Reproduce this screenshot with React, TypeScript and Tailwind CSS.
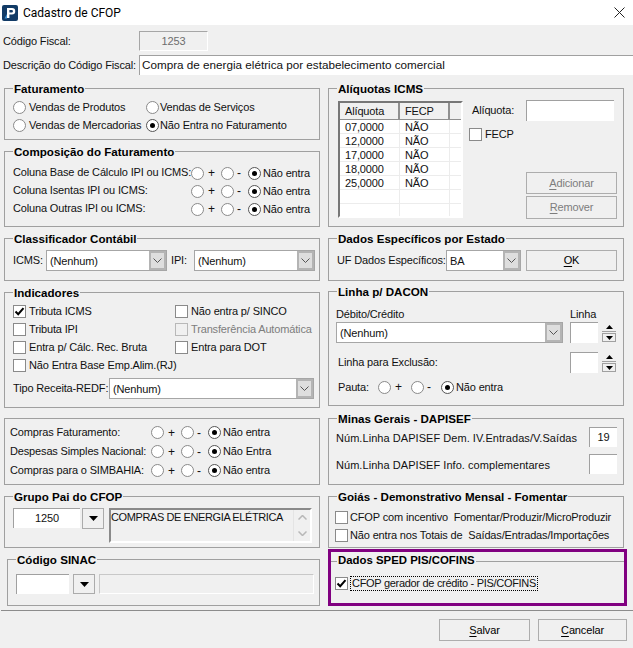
import React from "react";

function Radio({ on }: { on?: boolean }) {
  return (
    <span className={`flex h-[13px] w-[13px] shrink-0 items-center justify-center rounded-full border bg-white ${on ? "border-[#555555]" : "border-[#8a8a8a]"}`}>
      {on && <span className="h-[5px] w-[5px] rounded-full bg-black" />}
    </span>
  );
}

function Check({ on, off }: { on?: boolean; off?: boolean }) {
  return (
    <span className={`flex h-[13px] w-[13px] shrink-0 items-center justify-center border ${off ? "border-[#b8b8b8] bg-[#f0f0f0]" : "border-[#8a8a8a] bg-white"}`}>
      {on && (
        <svg width="11" height="11" viewBox="0 0 11 11" fill="none">
          <path d="M1.5 5.5 L4.2 8.2 L9.5 2.2" stroke="black" strokeWidth="2" />
        </svg>
      )}
    </span>
  );
}

function Tri({ a, b, last, className }: { a: string; b: string; last: string; className?: string }) {
  return (
    <div className={`flex items-center ${className ?? ""}`}>
      <span className={`flex items-center gap-[4px] text-[12px] ${a}`}>
        <Radio /> +
      </span>
      <span className={`flex items-center gap-[3px] text-[12px] ${b}`}>
        <Radio /> -
      </span>
      <span className="flex items-center gap-[2px]">
        <Radio on /> {last}
      </span>
    </div>
  );
}

function Group({ title, className, children }: { title?: string; className?: string; children?: React.ReactNode }) {
  return (
    <div className={`border border-[#a0a0a0] ${className ?? ""}`}>
      {title && (
        <div className="ml-[8px] -mt-[8px] h-[16px] w-fit bg-[#f0f0f0] px-[1px] text-[11.6px] font-bold leading-[16px] tracking-normal text-black">
          {title}
        </div>
      )}
      {children}
    </div>
  );
}

function Combo({ value, className }: { value: string; className?: string }) {
  return (
    <div className={`flex h-[21px] items-stretch border border-[#a6a6a6] bg-white ${className ?? ""}`}>
      <span className="flex-1 truncate pl-[3px] leading-[20px]">{value}</span>
      <span className="flex w-[17px] items-center justify-center border-2 border-[#b4b4b4] bg-[#dedede]">
        <svg width="9" height="5" viewBox="0 0 9 5" fill="none">
          <path d="M0.5 0.5 L4.5 4.5 L8.5 0.5" stroke="#555555" />
        </svg>
      </span>
    </div>
  );
}

// sunken edit box, only top and left show a line
function Edit({ value, className }: { value?: string; className?: string }) {
  return (
    <div className={`border-t border-l border-[#a0a0a0] bg-white leading-[18px] ${className ?? ""}`}>{value}</div>
  );
}

function DropBtn({ className }: { className?: string }) {
  return (
    <span className={`flex items-center justify-center border border-[#ababab] bg-[#f0f0f0] ${className ?? ""}`}>
      <svg width="9" height="5" viewBox="0 0 9 5">
        <path d="M0 0 H9 L4.5 5 Z" fill="black" />
      </svg>
    </span>
  );
}

function Spin() {
  return (
    <div className="flex flex-col gap-[1px]">
      <span className="flex h-[9px] w-[14px] items-center justify-center border-b border-[#a0a0a0] bg-[#f0f0f0]">
        <svg width="7" height="4" viewBox="0 0 7 4">
          <path d="M3.5 0 L7 4 H0 Z" fill="black" />
        </svg>
      </span>
      <span className="flex h-[9px] w-[14px] items-center justify-center border border-[#a0a0a0] bg-[#f0f0f0]">
        <svg width="7" height="4" viewBox="0 0 7 4">
          <path d="M0 0 H7 L3.5 4 Z" fill="black" />
        </svg>
      </span>
    </div>
  );
}

function Btn({ className, disabled, u, rest }: { className?: string; disabled?: boolean; u: string; rest: string }) {
  return (
    <button className={`flex items-center justify-center border border-[#adadad] bg-[#f0f0f0] ${disabled ? "text-[#7d7d7d]" : "text-black"} ${className ?? ""}`}>
      <span className="underline underline-offset-2">{u}</span>
      {rest}
    </button>
  );
}

const rates = ["07,0000", "12,0000", "17,0000", "18,0000", "25,0000", "", ""];

export default function App() {
  return (
    <div className="h-[648px] w-[633px] overflow-hidden whitespace-nowrap bg-[#f0f0f0] font-['Liberation_Sans',sans-serif] text-[11px] tracking-[-0.15px] text-[#111111]">
      {/* title bar */}
      <div className="flex h-[25px] items-center bg-white pl-[2px] pr-[8px]">
        <svg width="16" height="16" viewBox="0 0 16 16">
          <rect width="16" height="16" rx="2" fill="#123b66" />
          <path d="M5 3 H10 A3 3 0 0 1 10 9.5 H7.4 V13 H5 Z M7.4 5 V7.5 H9.7 A1.2 1.2 0 0 0 9.7 5 Z" fill="white" fillRule="evenodd" />
          <path d="M2.5 13.5 L5 9 V13.5 Z" fill="#3f8fd0" />
        </svg>
        <span className="ml-[5px] font-['Roboto',sans-serif] text-[12px] tracking-normal text-black">Cadastro de CFOP</span>
        <svg className="ml-auto" width="11" height="11" viewBox="0 0 11 11" fill="none">
          <path d="M0.5 0.5 L10.5 10.5 M10.5 0.5 L0.5 10.5" stroke="#222222" />
        </svg>
      </div>

      {/* codigo / descricao */}
      <div className="mt-[6px] flex h-[20px] items-center pl-[3px]">
        <span className="w-[136px]">Código Fiscal:</span>
        <div className="flex h-[20px] w-[69px] items-center justify-center border border-[#a6a6a6] border-b-white border-r-white text-[#6d6d6d]">1253</div>
      </div>
      <div className="mt-[4px] flex h-[20px] items-center pl-[3px]">
        <span className="w-[136px]">Descrição do Código Fiscal:</span>
        <Edit className="h-[20px] flex-1 pl-[2px] text-[11.7px] tracking-normal" value="Compra de energia elétrica por estabelecimento comercial" />
      </div>

      <div className="mt-[13px] flex items-start">
        {/* left column */}
        <div className="ml-[4px] w-[316px]">
          <Group title="Faturamento" className="h-[52px]">
            <div className="mt-[1px] flex h-[18px] items-center pl-[8px]">
              <span className="flex w-[133px] items-center gap-[3px]"><Radio /> Vendas de Produtos</span>
              <span className="flex items-center gap-[1px]"><Radio /> Vendas de Serviços</span>
            </div>
            <div className="flex h-[18px] items-center pl-[8px]">
              <span className="flex w-[133px] items-center gap-[3px]"><Radio /> Vendas de Mercadorias</span>
              <span className="flex items-center gap-[1px]"><Radio on /> Não Entra no Faturamento</span>
            </div>
          </Group>

          <Group title="Composição do Faturamento" className="mt-[11px] h-[76px]">
            {["Coluna Base de Cálculo IPI ou ICMS:", "Coluna Isentas IPI ou ICMS:", "Coluna Outras IPI ou ICMS:"].map((t, i) => (
              <div key={t} className={`flex h-[18px] items-center pl-[8px] ${i === 0 ? "mt-[4px]" : ""}`}>
                <span className="w-[178px] -translate-y-[1px]">{t}</span>
                <Tri a="w-[30px]" b="w-[27px]" last="Não entra" />
              </div>
            ))}
          </Group>

          <Group title="Classificador Contábil" className="mt-[11px] h-[43px]">
            <div className="mt-[3px] flex items-center pl-[8px]">
              <span className="w-[33px]">ICMS:</span>
              <Combo value="(Nenhum)" className="w-[121px]" />
              <span className="ml-[4px] w-[23px]">IPI:</span>
              <Combo value="(Nenhum)" className="w-[121px]" />
            </div>
          </Group>

          <Group title="Indicadores" className="mt-[11px] h-[116px]">
            <div className="mt-[1px] grid grid-cols-[162px_1fr] pl-[8px]">
              <label className="flex h-[18px] items-center gap-[3px]"><Check on /> Tributa ICMS</label>
              <label className="flex h-[18px] items-center gap-[3px]"><Check /> Não entra p/ SINCO</label>
              <label className="flex h-[18px] items-center gap-[3px]"><Check /> Tributa IPI</label>
              <label className="flex h-[18px] items-center gap-[3px] text-[#7d7d7d]"><Check off /> Transferência Automática</label>
              <label className="flex h-[18px] items-center gap-[3px]"><Check /> Entra p/ Cálc. Rec. Bruta</label>
              <label className="flex h-[18px] items-center gap-[3px]"><Check /> Entra para DOT</label>
              <label className="col-span-2 flex h-[18px] items-center gap-[3px]"><Check /> Não Entra Base Emp.Alim.(RJ)</label>
            </div>
            <div className="mt-[4px] flex items-center pl-[8px]">
              <span className="w-[96px]">Tipo Receita-REDF:</span>
              <Combo value="(Nenhum)" className="w-[205px]" />
            </div>
          </Group>

          <Group className="mt-[10px] h-[67px] pl-[5px] pt-[4px]">
            {[["Compras Faturamento:", "Não entra"], ["Despesas Simples Nacional:", "Não Entra"], ["Compras para o SIMBAHIA:", "Não entra"]].map(([t, l]) => (
              <div key={t} className="flex h-[19px] items-center">
                <span className="w-[141px]">{t}</span>
                <Tri a="w-[30px]" b="w-[27px]" last={l} />
              </div>
            ))}
          </Group>

          <Group title="Grupo Pai do CFOP" className="mt-[11px] h-[52px]">
            <div className="mt-[3px] flex items-start pl-[8px]">
              <Edit className="h-[20px] w-[67px] text-center" value="1250" />
              <DropBtn className="ml-[2px] h-[21px] w-[22px]" />
              <div className="ml-[5px] flex h-[35px] w-[203px] border-2 border-[#8a8a8a] border-b-white border-r-white">
                <span className="min-w-0 flex-1 overflow-hidden leading-[14px] tracking-[-0.4px]">COMPRAS DE ENERGIA ELÉTRICA</span>
                <span className="flex w-[17px] shrink-0 flex-col items-center justify-around border-l border-[#e4e4e4]">
                  <svg width="9" height="5" viewBox="0 0 9 5" fill="none"><path d="M0.5 4.5 L4.5 0.5 L8.5 4.5" stroke="#b8b8b8" strokeWidth="1.5" /></svg>
                  <svg width="9" height="5" viewBox="0 0 9 5" fill="none"><path d="M0.5 0.5 L4.5 4.5 L8.5 0.5" stroke="#b8b8b8" strokeWidth="1.5" /></svg>
                </span>
              </div>
            </div>
          </Group>

          <Group title="Código SINAC" className="ml-[3px] mt-[11px] h-[47px]">
            <div className="mt-[6px] flex items-start pl-[8px]">
              <Edit className="h-[20px] w-[53px]" />
              <DropBtn className="ml-[4px] h-[20px] w-[22px]" />
              <div className="ml-[4px] h-[20px] w-[215px] border border-[#c8c8c8] border-b-white border-r-white" />
            </div>
          </Group>
        </div>

        {/* right column */}
        <div className="ml-[8px] w-[299px]">
          <Group title="Alíquotas ICMS" className="h-[139px] w-[296px]">
            <div className="mt-[4px] flex items-start pl-[9px]">
              <div className="h-[117px] w-[125px] overflow-hidden border-2 border-[#777777] border-b-white border-r-white bg-white">
                <div className="flex h-[17px] border-b border-[#8f8f8f] bg-[#f0f0f0]">
                  <span className="w-[60px] border-r-2 border-[#8f8f8f] pl-[5px] leading-[16px]">Alíquota</span>
                  <span className="w-[50px] border-r-2 border-[#8f8f8f] pl-[5px] leading-[16px]">FECP</span>
                </div>
                {rates.map((r, i) => (
                  <div key={i} className="flex h-[14px] border-b border-[#ececec] leading-[15px]">
                    <span className="w-[60px] border-r border-[#ececec] pl-[5px]">{r}</span>
                    <span className="w-[50px] border-r border-[#ececec] pl-[5px]">{r && "NÃO"}</span>
                  </div>
                ))}
              </div>
              <div className="ml-[6px]">
                <div className="-mt-[1px] flex h-[21px] items-center">
                  <span className="ml-[3px] w-[54px]">Alíquota:</span>
                  <Edit className="h-[21px] w-[88px]" />
                </div>
                <label className="mt-[7px] flex h-[13px] items-center gap-[3px]"><Check /> FECP</label>
                <Btn disabled u="A" rest="dicionar" className="ml-[57px] mt-[31px] h-[22px] w-[91px]" />
                <Btn disabled u="R" rest="emover" className="ml-[57px] mt-[2px] h-[23px] w-[91px]" />
              </div>
            </div>
          </Group>

          <Group title="Dados Específicos por Estado" className="mt-[11px] h-[43px] w-[296px]">
            <div className="mt-[3px] flex items-center pl-[8px]">
              <span className="w-[109px]">UF Dados Específicos:</span>
              <Combo value="BA" className="w-[75px]" />
              <Btn u="O" rest="K" className="ml-[5px] h-[21px] w-[91px]" />
            </div>
          </Group>

          <Group title="Linha p/ DACON" className="mt-[10px] h-[115px] w-[296px]">
            <div className="mt-[6px] flex h-[16px] items-center pl-[7px]">
              <span className="w-[234px]">Débito/Crédito</span>
              <span>Linha</span>
            </div>
            <div className="flex items-start pl-[7px]">
              <Combo value="(Nenhum)" className="w-[227px]" />
              <Edit className="ml-[7px] h-[21px] w-[28px]" />
              <span className="ml-[4px] mt-[1px]"><Spin /></span>
            </div>
            <div className="mt-[9px] flex items-center pl-[9px]">
              <span className="w-[232px]">Linha para Exclusão:</span>
              <Edit className="h-[21px] w-[28px]" />
              <span className="ml-[4px]"><Spin /></span>
            </div>
            <div className="mt-[5px] flex h-[18px] items-center pl-[9px]">
              <span className="w-[40px]">Pauta:</span>
              <Tri a="w-[33px]" b="w-[30px]" last="Não entra" />
            </div>
          </Group>

          <Group title="Minas Gerais - DAPISEF" className="mt-[12px] h-[67px] w-[296px]">
            <div className="flex items-start pl-[7px]">
              <span className="mt-[3px] w-[253px] tracking-[0.05px]">Núm.Linha DAPISEF Dem. IV.Entradas/V.Saídas</span>
              <Edit className="h-[20px] w-[28px] text-center" value="19" />
            </div>
            <div className="mt-[7px] flex items-start pl-[7px]">
              <span className="mt-[3px] w-[253px] tracking-[0.05px]">Núm.Linha DAPISEF Info. complementares</span>
              <Edit className="h-[20px] w-[28px]" />
            </div>
          </Group>

          <Group title="Goiás - Demonstrativo Mensal - Fomentar" className="mt-[11px] h-[52px] w-[296px]">
            <div className="mt-[3px] flex h-[18px] items-center gap-[2px] whitespace-pre pl-[6px]"><Check /><span>CFOP com incentivo  Fomentar/Produzir/MicroProduzir</span></div>
            <div className="flex h-[18px] items-center gap-[2px] whitespace-pre pl-[6px]"><Check /><span>Não entra nos Totais de  Saídas/Entradas/Importações</span></div>
          </Group>

          {/* highlighted box drawn over the screenshot */}
          <div className="mt-[1px] h-[57px] border-[3px] border-[#800080]">
            <div className="mt-[1px] flex h-[16px] items-center">
              <span className="h-px w-[6px] bg-[#a0a0a0]" />
              <span className="px-[1px] text-[11.4px] font-bold tracking-normal text-black">Dados SPED PIS/COFINS</span>
              <span className="h-px flex-1 bg-[#a0a0a0]" />
            </div>
            <div className="mt-[7px] flex h-[15px] items-center pl-[4px]">
              <Check on />
              <span className="ml-[2px] border border-dotted border-black px-[1px] leading-[13px] tracking-[-0.3px]">CFOP gerador de crédito - PIS/COFINS</span>
            </div>
          </div>
        </div>
      </div>

      {/* bottom */}
      <div className="ml-[1px] mt-[4px] h-px bg-[#8c8c8c]" />
      <div className="mt-[8px] flex justify-end gap-[8px] pr-[6px]">
        <Btn u="S" rest="alvar" className="h-[22px] w-[91px]" />
        <Btn u="C" rest="ancelar" className="h-[22px] w-[89px]" />
      </div>
    </div>
  );
}
